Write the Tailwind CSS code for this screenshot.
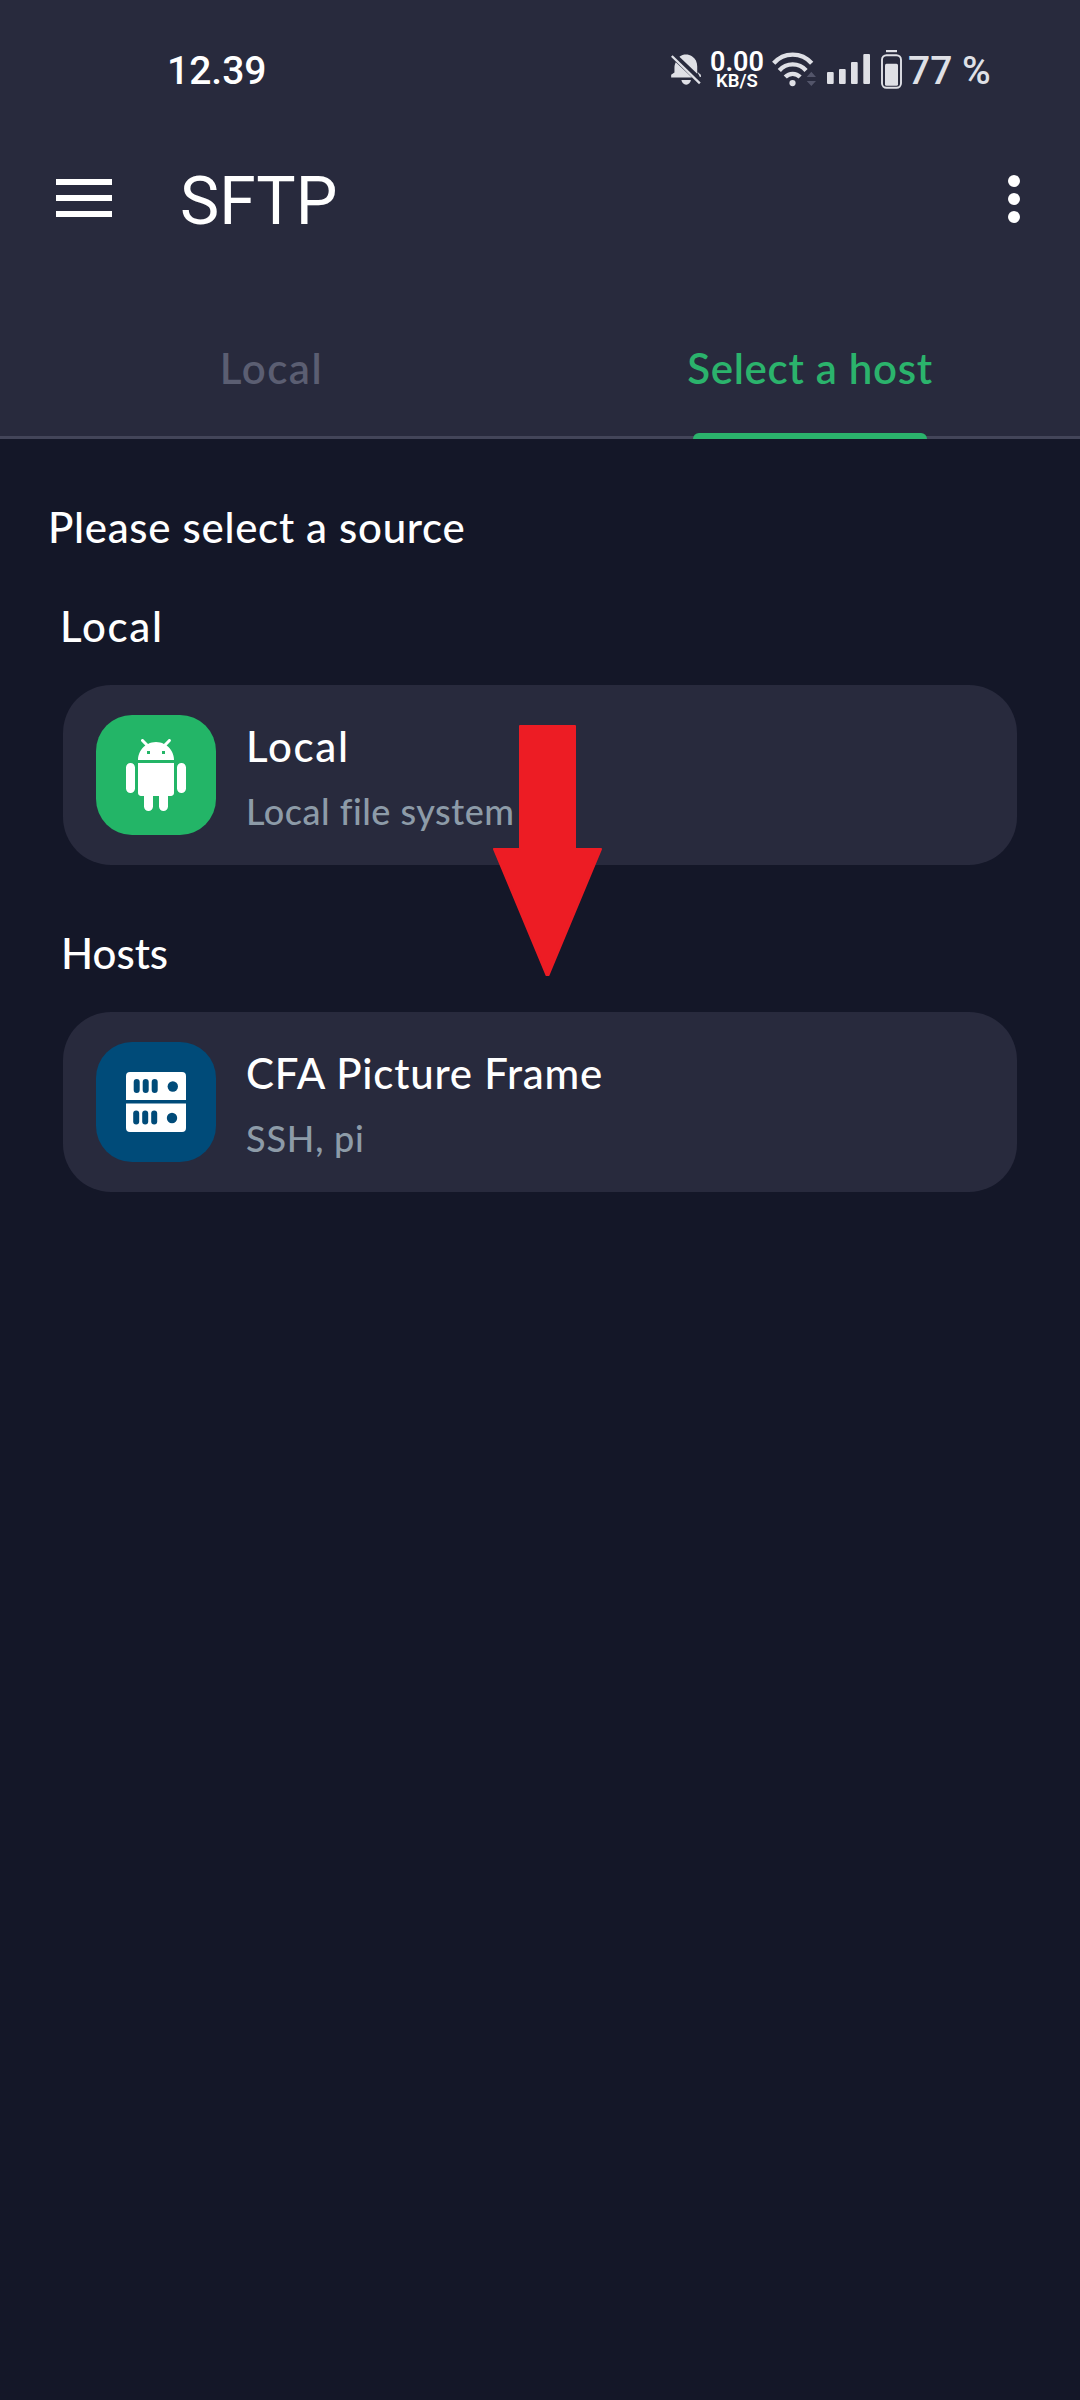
<!DOCTYPE html>
<html lang="en">
<head>
<meta charset="utf-8">
<title>SFTP</title>
<script src="https://cdn.jsdelivr.net/npm/@tailwindcss/browser@4"></script>
</head>
<body class="bg-[#141728]">
<div class="relative h-[2400px] w-[1080px] overflow-hidden bg-[#141728] font-['Lato',sans-serif] text-white">
  <header class="bg-[#282a3d]">
    <!-- Status bar -->
    <div class="flex h-[138px] items-center justify-between pl-[167px] font-['Roboto',sans-serif] font-medium">
      <span class="pt-[4px] text-[39px] leading-none">12.39</span>
      <div class="flex w-[410px] items-center text-[#dfe0e6]">
        <svg class="h-[33px] w-8 shrink-0" viewBox="15 25 96 100" fill="currentColor">
          <path d="M32 53C29 59 28 64 28 70V84L18 91V99H81Z"/>
          <path d="M43 36C55 28 70 28 81 35C92 42 97 53 97 66V88Z"/>
          <path d="M97 82L108 91V98H105Z"/>
          <path d="M20 34L105 117" stroke="currentColor" stroke-width="7"/>
          <path d="M49 107H78C77 115 71 121 63.500 121S50 115 49 107Z"/>
        </svg>
        <div class="ml-[7px] flex w-[56px] shrink-0 flex-col items-center pt-[3px] text-white">
          <span class="text-[27px] leading-[20px] font-semibold">0.00</span>
          <span class="text-[18.500px] leading-[18px] font-semibold">KB/S</span>
        </div>
        <svg class="ml-[7px] h-[35px] w-[45px] shrink-0" viewBox="320 20 136 106" fill="none" stroke="currentColor" stroke-width="13">
          <path d="M325 54A76 76 0 0 1 440 54"/>
          <path d="M342 76A54 54 0 0 1 423 76"/>
          <path d="M360 96A31 31 0 0 1 405 96"/>
          <circle cx="382" cy="114" r="9.500" fill="currentColor" stroke="none"/>
          <path d="M425 96L439 80L453 96ZM425 108H453L439 123Z" fill="#53556a" stroke="none"/>
        </svg>
        <svg class="ml-[10px] h-[30px] w-[43px] shrink-0" viewBox="0 0 43 30" fill="currentColor">
          <rect x="0" y="18" width="6.700" height="12" rx="1"/>
          <rect x="12" y="15" width="6.700" height="15" rx="1"/>
          <rect x="24" y="8" width="6.700" height="22" rx="1"/>
          <rect x="36.300" y="0" width="6.700" height="30" rx="1"/>
        </svg>
        <svg class="ml-[11px] h-[39px] w-[21px] shrink-0" viewBox="0 0 21 39">
          <rect x="5" y="0" width="11" height="2.200" fill="currentColor"/>
          <rect x="1" y="5.200" width="19" height="32.600" rx="4.500" fill="none" stroke="currentColor" stroke-width="1.900"/>
          <rect x="4" y="13.700" width="13" height="22" rx="1.500" fill="currentColor"/>
        </svg>
        <span class="ml-[6px] pt-[4px] text-[39px] leading-none whitespace-nowrap">77 %</span>
      </div>
    </div>

    <!-- App bar -->
    <div class="mb-[37px] flex h-[122px] items-center pr-[60px] pl-[56px]">
      <div class="mb-[2px] flex w-[56px] flex-col gap-[10px]">
        <div class="h-[6px] bg-white"></div>
        <div class="h-[6px] bg-white"></div>
        <div class="h-[6px] bg-white"></div>
      </div>
      <h1 class="ml-[68px] pt-[6px] font-['Roboto',sans-serif] text-[66px] leading-none">SFTP</h1>
      <div class="ml-auto flex flex-col gap-[6px]">
        <div class="size-3 rounded-full bg-white"></div>
        <div class="size-3 rounded-full bg-white"></div>
        <div class="size-3 rounded-full bg-white"></div>
      </div>
    </div>

    <!-- Tabs -->
    <div class="grid h-[142px] grid-cols-2 border-b-[3px] border-[#434559] text-[42px] leading-[50px] font-semibold">
      <div class="flex items-center justify-center pt-[2px] pl-[3px] tracking-[1.500px] text-[#5b5e72]">Local</div>
      <div class="relative flex items-center justify-center pt-[2px] tracking-[0.720px] text-[#2bb36c]">Select a host
        <div class="absolute -bottom-[3px] left-[153px] h-[6px] w-[234px] rounded-t-[6px] bg-[#2bb36c]"></div>
      </div>
    </div>
  </header>

  <main class="px-[63px] pt-[63px] text-[42px] leading-[50px] font-medium">
    <p class="-ml-[15px] tracking-[0.700px]">Please select a source</p>

    <h2 class="mt-[49px] -ml-[3px] tracking-[1.700px]">Local</h2>
    <div class="mt-[34px] flex h-[180px] items-center rounded-[48px] bg-[#282a3d] pl-[33px]">
      <div class="flex size-[120px] items-center justify-center rounded-[36px] bg-[#23b567]">
        <svg class="size-[72px]" viewBox="0 0 24 24" fill="white"><path d="M6 18c0 .55.45 1 1 1h1v3.500c0 .83.67 1.500 1.500 1.500s1.500-.67 1.500-1.500V19h2v3.500c0 .83.67 1.500 1.500 1.500s1.500-.67 1.500-1.500V19h1c.55 0 1-.45 1-1V8H6v10zM3.500 8C2.670 8 2 8.670 2 9.500v7c0 .83.67 1.500 1.500 1.500S5 17.330 5 16.500v-7C5 8.670 4.330 8 3.500 8zm17 0c-.83 0-1.500.67-1.500 1.500v7c0 .83.67 1.500 1.500 1.500s1.500-.67 1.500-1.500v-7c0-.83-.67-1.500-1.500-1.500zm-4.970-5.840l1.300-1.300c.2-.2.2-.51 0-.71-.2-.2-.51-.2-.71 0l-1.480 1.480C13.850 1.230 12.950 1 12 1c-.96 0-1.860.23-2.660.63L7.850.15c-.2-.2-.51-.2-.71 0-.2.2-.2.51 0 .71l1.310 1.310C6.970 3.260 6 5.010 6 7h12c0-1.990-.97-3.750-2.470-4.840zM10 5H9V4h1v1zm5 0h-1V4h1v1z"/></svg>
      </div>
      <div class="ml-[30px] pt-[4px]">
        <div class="tracking-[1.700px]">Local</div>
        <div class="mt-[18px] text-[36px] leading-[44px] tracking-[0.500px] text-[#8d9ba8]">Local file system</div>
      </div>
    </div>

    <h2 class="mt-[63px] -ml-[2px]">Hosts</h2>
    <div class="mt-[34px] flex h-[180px] items-center rounded-[48px] bg-[#282a3d] pl-[33px]">
      <div class="flex size-[120px] items-center justify-center rounded-[36px] bg-[#004b79]">
        <svg class="size-[60px]" viewBox="0 0 60 60">
          <path d="M4 0H56A4 4 0 0 1 60 4V28H0V4A4 4 0 0 1 4 0ZM0 31.500H60V56A4 4 0 0 1 56 60H4A4 4 0 0 1 0 56Z" fill="white"/>
          <g fill="#004b79">
            <rect x="7.700" y="7" width="6" height="14" rx="3"/><rect x="16.700" y="7" width="6" height="14" rx="3"/><rect x="25.700" y="7" width="6" height="14" rx="3"/>
            <circle cx="46.800" cy="14.500" r="5.200"/>
            <rect x="7.200" y="38.500" width="6" height="14" rx="3"/><rect x="16.200" y="38.500" width="6" height="14" rx="3"/><rect x="25.200" y="38.500" width="6" height="14" rx="3"/>
            <circle cx="46" cy="46" r="5.200"/>
          </g>
        </svg>
      </div>
      <div class="ml-[30px] pt-[4px]">
        <div class="tracking-[0.780px]">CFA Picture Frame</div>
        <div class="mt-[18px] text-[36px] leading-[44px] tracking-[0.800px] text-[#8d9ba8]">SSH, pi</div>
      </div>
    </div>
  </main>

  <!-- Pointer arrow over the list -->
  <svg class="absolute top-[725px] left-[493px] h-[251px] w-[109px]" viewBox="0 0 109 251">
    <path d="M27 1H82V124H108L55.500 250H53.500L1 124H27Z" fill="#ed1c24" stroke="#ed1c24" stroke-width="2" stroke-linejoin="round"/>
  </svg>
</div>
</body>
</html>
